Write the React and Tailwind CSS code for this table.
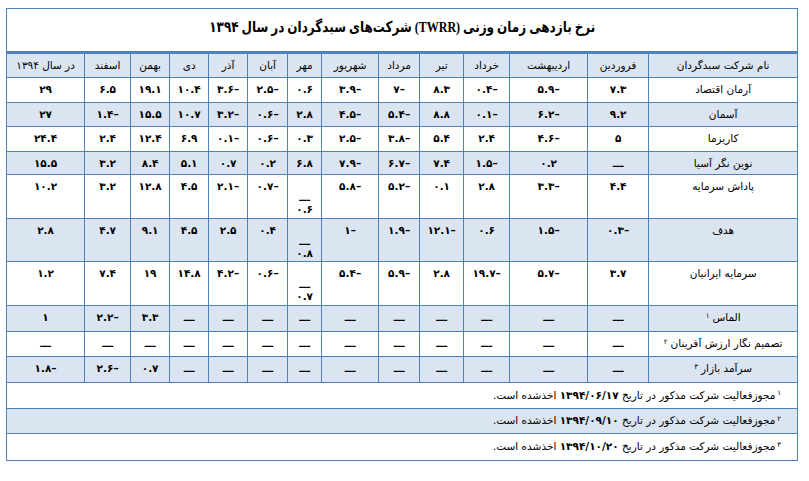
import React from "react";

const cols = [149, 61, 78, 46, 44, 41, 57, 34, 40, 39, 39, 39, 46, 78];

const heads = [
  "نام شرکت سبدگردان",
  "فروردین",
  "اردیبهشت",
  "خرداد",
  "تیر",
  "مرداد",
  "شهریور",
  "مهر",
  "آبان",
  "آذر",
  "دی",
  "بهمن",
  "اسفند",
  "در سال ۱۳۹۴",
];

const D = "ـــ";

// values: فروردین ... اسفند, در سال
const rows = [
  { name: "آرمان اقتصاد", h: "h-[25px]", v: ["۷.۳", "–۵.۹", "–۰.۴", "۸.۳", "–۷", "–۳.۹", "۰.۶", "–۲.۵", "–۳.۶", "۱۰.۴", "۱۹.۱", "۶.۵", "۲۹"] },
  { name: "آسمان", h: "h-[24px]", v: ["۹.۲", "–۶.۲", "–۰.۱", "۸.۸", "–۵.۴", "–۴.۵", "۲.۸", "–۰.۶", "–۳.۲", "۱۰.۷", "۱۵.۵", "–۱.۴", "۲۷"] },
  { name: "کاریزما", h: "h-[25px]", v: ["۵", "–۴.۶", "۲.۴", "۵.۴", "–۳.۸", "–۲.۵", "۰.۳", "–۰.۶", "–۰.۱", "۶.۹", "۱۲.۴", "۲.۴", "۲۴.۴"] },
  { name: "نوین نگر آسیا", h: "h-[23px]", v: [D, "۰.۲", "–۱.۵", "۷.۴", "–۶.۷", "–۷.۹", "۶.۸", "۰.۲", "۰.۷", "۵.۱", "۸.۴", "۳.۲", "۱۵.۵"] },
  { name: "پاداش سرمایه", h: "h-[44px]", v: ["۴.۴", "–۳.۳", "۲.۸", "۰.۱", "–۵.۲", "–۵.۸", ["۰.۶"], "–۰.۷", "–۲.۱", "۴.۵", "۱۲.۸", "۳.۲", "۱۰.۲"] },
  { name: "هدف", h: "h-[43px]", v: ["–۰.۳", "–۱.۵", "۰.۶", "–۱۲.۱", "–۱.۹", "–۱", ["۰.۸"], "۰.۴", "۲.۵", "۴.۵", "۹.۱", "۴.۷", "۲.۸"] },
  { name: "سرمایه ایرانیان", h: "h-[44px]", v: ["۳.۷", "–۵.۷", "–۱۹.۷", "۲.۸", "–۵.۹", "–۵.۴", ["۰.۷"], "–۰.۶", "–۴.۲", "۱۴.۸", "۱۹", "۷.۴", "۱.۲"] },
  { name: "الماس", sup: "۱", h: "h-[26px]", v: [D, D, D, D, D, D, D, D, D, D, "۳.۳", "–۲.۲", "۱"] },
  { name: "تصمیم نگار ارزش آفرینان", sup: "۲", h: "h-[25px]", v: [D, D, D, D, D, D, D, D, D, D, D, D, D] },
  { name: "سرآمد بازار", sup: "۳", h: "h-[26px]", v: [D, D, D, D, D, D, D, D, D, D, "۰.۷", "–۲.۶", "–۱.۸"] },
];

const notes = [
  { n: "۱", date: "۱۳۹۴/۰۶/۱۷", h: "h-[26px]" },
  { n: "۲", date: "۱۳۹۴/۰۹/۱۰", h: "h-[25px]" },
  { n: "۳", date: "۱۳۹۴/۱۰/۲۰", h: "h-[27px]" },
];

const cell = "border border-[#4f81bd] text-center align-top px-0";

export default function App() {
  return (
    <div className="w-[809px] h-[481px] bg-white pt-[8px] pl-[6px] font-['DejaVu_Sans',sans-serif] text-black">
      <table dir="rtl" className="table-fixed border-collapse w-[791px]">
        <colgroup>
          {cols.map((w, i) => (
            <col key={i} style={{ width: w }} />
          ))}
        </colgroup>
        <tbody>
          <tr className="h-[44px]">
            <td colSpan={14} className="border border-[#4f81bd] align-top text-center pt-[6px]">
              <span className="inline-block scale-x-[0.8] text-[15px] font-bold font-['Liberation_Serif','DejaVu_Sans',serif]">
                نرخ بازدهی زمان وزنی (TWRR) شرکت‌های سبدگردان در سال ۱۳۹۴
              </span>
            </td>
          </tr>
          <tr className="h-[25px] bg-[#dbe5f1]">
            {heads.map((h, i) => (
              <td key={i} className={`${cell} border-t-[3px] pt-[4px] text-[10.5px]`}>
                {h}
              </td>
            ))}
          </tr>
          {rows.map((r, ri) => (
            <tr key={ri} className={`${r.h} ${ri % 2 === 1 ? "bg-[#dbe5f1]" : "bg-white"}`}>
              <td className={`${cell} pt-[4px] text-[10.5px]`}>
                {r.name}
                {r.sup && <sup className="text-[7px] mr-[3px]">{r.sup}</sup>}
              </td>
              {r.v.map((v, vi) =>
                Array.isArray(v) ? (
                  <td key={vi} className={`${cell} text-[10.5px] font-bold`}>
                    <div className="flex flex-col items-center pt-[16px] leading-[12px]">
                      <span>ـــ</span>
                      <span>{v[0]}</span>
                    </div>
                  </td>
                ) : (
                  <td key={vi} className={`${cell} pt-[4px] text-[10.5px] font-bold`}>
                    {v}
                  </td>
                )
              )}
            </tr>
          ))}
          {notes.map((n, i) => (
            <tr key={i} className={`${n.h} ${i === 1 ? "bg-[#dbe5f1]" : "bg-white"}`}>
              <td colSpan={14} className="border border-[#4f81bd] text-right align-middle pr-[16px] text-[10.5px]">
                <sup className="text-[7px] ml-[2px]">{n.n}</sup>
                مجوزفعالیت شرکت مذکور در تاریخ <span className="font-bold">{n.date}</span> اخذشده است.
              </td>
            </tr>
          ))}
        </tbody>
      </table>
    </div>
  );
}
